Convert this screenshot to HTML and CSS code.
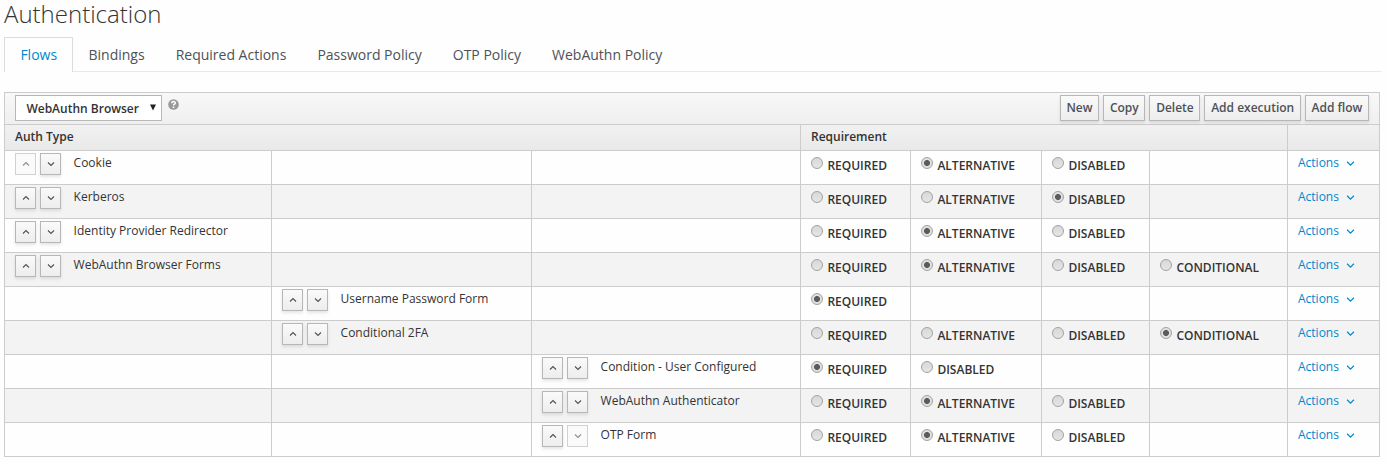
FILE: index.html
```html
<!DOCTYPE html>
<html lang="en">
<head>
<meta charset="utf-8">
<title>Authentication</title>
<link rel="stylesheet" href="styles.css">
</head>
<body>
<svg class="defs" width="0" height="0"><defs>
<symbol id="up" viewBox="0 0 8 6"><path d="M1 4.5 4 1.6 7 4.5" fill="none" stroke="currentColor" stroke-width="1.1"/></symbol>
<symbol id="down" viewBox="0 0 8 6"><path d="M1 1.5 4 4.4 7 1.5" fill="none" stroke="currentColor" stroke-width="1.1"/></symbol>
</defs></svg>
<h1>Authentication</h1>
<ul class="tabs">
<li class="active">Flows</li><li>Bindings</li><li>Required Actions</li><li>Password Policy</li><li>OTP Policy</li><li>WebAuthn Policy</li>
</ul>
<table class="flows">
<colgroup><col class="c1"><col class="c2"><col class="c3"><col class="c4"><col class="c5"><col class="c6"><col class="c7"><col class="c8"></colgroup>
<thead>
<tr class="bar"><th colspan="8"><div class="toolbar">
<span class="select">WebAuthn Browser<svg width="6" height="7" viewBox="0 0 6 7"><path d="M0 .5h6L3 6.5z" fill="#222"/></svg></span>
<svg class="help" width="11" height="11" viewBox="0 0 11 11"><circle cx="5.5" cy="5.5" r="5.3" fill="#999"/><path d="M3.7 4.2C3.8 2.1 7.3 2.1 7.3 4.1 7.3 5.3 5.5 5.2 5.5 6.6M5.5 7.4V8.9" fill="none" stroke="#fff" stroke-width="1.5"/></svg>
<span class="buttons"><button>New</button><button>Copy</button><button>Delete</button><button>Add execution</button><button>Add flow</button></span>
</div></th></tr>
<tr class="heads"><th colspan="3">Auth Type</th><th colspan="4">Requirement</th><th></th></tr>
</thead>
<tbody>
<tr><td><div class="step"><i class="mv off"><svg><use href="#up"/></svg></i><i class="mv"><svg><use href="#down"/></svg></i><span>Cookie</span></div></td><td></td><td></td>
<td><label class="opt"><i></i>REQUIRED</label></td><td><label class="opt on"><i></i>ALTERNATIVE</label></td><td><label class="opt"><i></i>DISABLED</label></td><td></td><td><a class="act">Actions<svg><use href="#down"/></svg></a></td></tr>
<tr><td><div class="step"><i class="mv"><svg><use href="#up"/></svg></i><i class="mv"><svg><use href="#down"/></svg></i><span>Kerberos</span></div></td><td></td><td></td>
<td><label class="opt"><i></i>REQUIRED</label></td><td><label class="opt"><i></i>ALTERNATIVE</label></td><td><label class="opt on"><i></i>DISABLED</label></td><td></td><td><a class="act">Actions<svg><use href="#down"/></svg></a></td></tr>
<tr><td><div class="step"><i class="mv"><svg><use href="#up"/></svg></i><i class="mv"><svg><use href="#down"/></svg></i><span>Identity Provider Redirector</span></div></td><td></td><td></td>
<td><label class="opt"><i></i>REQUIRED</label></td><td><label class="opt on"><i></i>ALTERNATIVE</label></td><td><label class="opt"><i></i>DISABLED</label></td><td></td><td><a class="act">Actions<svg><use href="#down"/></svg></a></td></tr>
<tr><td><div class="step"><i class="mv"><svg><use href="#up"/></svg></i><i class="mv"><svg><use href="#down"/></svg></i><span>WebAuthn Browser Forms</span></div></td><td></td><td></td>
<td><label class="opt"><i></i>REQUIRED</label></td><td><label class="opt on"><i></i>ALTERNATIVE</label></td><td><label class="opt"><i></i>DISABLED</label></td><td><label class="opt"><i></i>CONDITIONAL</label></td><td><a class="act">Actions<svg><use href="#down"/></svg></a></td></tr>
<tr><td></td><td><div class="step"><i class="mv"><svg><use href="#up"/></svg></i><i class="mv"><svg><use href="#down"/></svg></i><span>Username Password Form</span></div></td><td></td>
<td><label class="opt on"><i></i>REQUIRED</label></td><td></td><td></td><td></td><td><a class="act">Actions<svg><use href="#down"/></svg></a></td></tr>
<tr><td></td><td><div class="step"><i class="mv"><svg><use href="#up"/></svg></i><i class="mv"><svg><use href="#down"/></svg></i><span>Conditional 2FA</span></div></td><td></td>
<td><label class="opt"><i></i>REQUIRED</label></td><td><label class="opt"><i></i>ALTERNATIVE</label></td><td><label class="opt"><i></i>DISABLED</label></td><td><label class="opt on"><i></i>CONDITIONAL</label></td><td><a class="act">Actions<svg><use href="#down"/></svg></a></td></tr>
<tr><td></td><td></td><td><div class="step"><i class="mv"><svg><use href="#up"/></svg></i><i class="mv"><svg><use href="#down"/></svg></i><span>Condition - User Configured</span></div></td>
<td><label class="opt on"><i></i>REQUIRED</label></td><td><label class="opt"><i></i>DISABLED</label></td><td></td><td></td><td><a class="act">Actions<svg><use href="#down"/></svg></a></td></tr>
<tr><td></td><td></td><td><div class="step"><i class="mv"><svg><use href="#up"/></svg></i><i class="mv"><svg><use href="#down"/></svg></i><span>WebAuthn Authenticator</span></div></td>
<td><label class="opt"><i></i>REQUIRED</label></td><td><label class="opt on"><i></i>ALTERNATIVE</label></td><td><label class="opt"><i></i>DISABLED</label></td><td></td><td><a class="act">Actions<svg><use href="#down"/></svg></a></td></tr>
<tr><td></td><td></td><td><div class="step"><i class="mv"><svg><use href="#up"/></svg></i><i class="mv off"><svg><use href="#down"/></svg></i><span>OTP Form</span></div></td>
<td><label class="opt"><i></i>REQUIRED</label></td><td><label class="opt on"><i></i>ALTERNATIVE</label></td><td><label class="opt"><i></i>DISABLED</label></td><td></td><td><a class="act">Actions<svg><use href="#down"/></svg></a></td></tr>
</tbody>
</table>
</body>
</html>
```
FILE: styles.css
```css
* { box-sizing: border-box; }
body { margin: 0; padding: 0 4px; height: 465px; overflow: hidden; background: #fefefe; color: #333; font: 12px/20px "Open Sans", sans-serif; }
.defs { display: block; }
h1 { margin: 0; height: 37px; font-size: 24px; line-height: 27px; font-weight: 300; }
.tabs { display: flex; margin: 0 0 20px; padding: 0; width: 1377px; height: 35px; list-style: none; border-bottom: 1px solid #e9e9e9; font-size: 14px; line-height: 36px; color: #4d5258; }
.tabs li { height: 35px; padding: 0 15.5px; white-space: nowrap; }
.tabs .active { width: 69px; padding: 0 15.4px; line-height: 34px; color: #0088ce; background: #fefefe; border: 1px solid #dcdcdc; border-bottom: 0; }

.flows { width: 1376px; table-layout: fixed; border-collapse: separate; border-spacing: 0; border: 1px solid #ccc; border-width: 1px 0 0 1px; }
.c1 { width: 267px; } .c2 { width: 260px; } .c3 { width: 269px; } .c4 { width: 110px; }
.c5 { width: 131px; } .c6 { width: 108px; } .c7 { width: 138px; } .c8 { width: 92px; }
th, td { padding: 0 10px; border: 1px solid #ccc; border-width: 0 1px 1px 0; vertical-align: top; text-align: left; }
th { font-weight: 600; }
.bar th { height: 32px; background: linear-gradient(#f8f8f8, #efefef); }
.heads th { height: 26px; line-height: 23px; background: linear-gradient(#f1f1f1, #e9e9e9); }
td { height: 34px; }
tbody tr:nth-child(even) { background: #f3f3f3; }

.toolbar { display: flex; align-items: flex-start; padding-top: 2px; height: 31px; }
.select { display: flex; align-items: center; justify-content: space-between; width: 147px; height: 26px; padding: 1px 5px 0 10.4px; background: #fff; border: 1px solid #b7b7b7; }
.select svg { margin-top: -2px; }
.help { margin: 4px 0 0 6px; }
.buttons { display: flex; gap: 4px; margin-left: auto; }
button { height: 26px; margin: 0; padding: 0 5.7px; font: 600 12px/22px "Open Sans", sans-serif; color: #4d5258; background: linear-gradient(#fafafa, #ededed); border: 1px solid #b7b7b7; box-shadow: 0 2px 3px rgba(3,3,3,.1); }

.step { display: flex; gap: 4px; padding-top: 2px; white-space: nowrap; }
.step span { margin-left: 8.6px; line-height: 20px; }
.mv { display: flex; align-items: center; justify-content: center; width: 21px; height: 22px; color: #4d5258; background: linear-gradient(#fafafa, #ededed); border: 1px solid #b7b7b7; box-shadow: 0 2px 3px rgba(3,3,3,.1); }
.mv svg, .act svg { width: 8px; height: 6px; }
.mv.off { color: #8b8d8f; background: #fafafa; border-color: #d1d1d1; box-shadow: none; }
.opt { display: flex; gap: 4.4px; padding-top: 5px; font-weight: 600; line-height: 20px; white-space: nowrap; }
.opt i { width: 12px; height: 12px; margin-top: 1px; border: 1px solid #a2a2a2; border-radius: 50%; background: linear-gradient(#d8d8d8, #e5e5e5); }
.opt.on i { background: radial-gradient(circle, #5b5b5b 2.6px, #e0e0e0 3.4px); }
.act { display: flex; align-items: center; gap: 7.4px; padding-top: 2px; color: #0088ce; }
.act svg { width: 9px; height: 7px; }
```
